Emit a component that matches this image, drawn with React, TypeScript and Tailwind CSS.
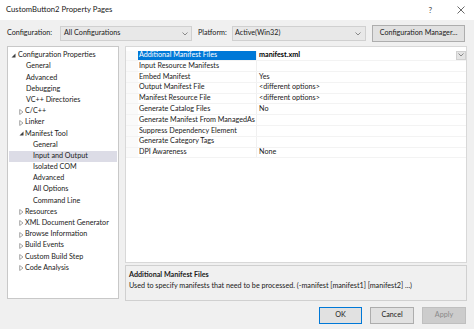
import React from "react";

const font = { fontFamily: 'Lato, "Noto Sans", sans-serif' };

type TreeItem = { label: string; level: number; arrow?: "open" | "closed"; selected?: boolean };

const tree: TreeItem[] = [
  { label: "Configuration Properties", level: 0, arrow: "open" },
  { label: "General", level: 1 },
  { label: "Advanced", level: 1 },
  { label: "Debugging", level: 1 },
  { label: "VC++ Directories", level: 1 },
  { label: "C/C++", level: 1, arrow: "closed" },
  { label: "Linker", level: 1, arrow: "closed" },
  { label: "Manifest Tool", level: 1, arrow: "open" },
  { label: "General", level: 2 },
  { label: "Input and Output", level: 2, selected: true },
  { label: "Isolated COM", level: 2 },
  { label: "Advanced", level: 2 },
  { label: "All Options", level: 2 },
  { label: "Command Line", level: 2 },
  { label: "Resources", level: 1, arrow: "closed" },
  { label: "XML Document Generator", level: 1, arrow: "closed" },
  { label: "Browse Information", level: 1, arrow: "closed" },
  { label: "Build Events", level: 1, arrow: "closed" },
  { label: "Custom Build Step", level: 1, arrow: "closed" },
  { label: "Code Analysis", level: 1, arrow: "closed" },
];

const props: [string, string][] = [
  ["Additional Manifest Files", "manifest.xml"],
  ["Input Resource Manifests", ""],
  ["Embed Manifest", "Yes"],
  ["Output Manifest File", "<different options>"],
  ["Manifest Resource File", "<different options>"],
  ["Generate Catalog Files", "No"],
  ["Generate Manifest From ManagedAs", ""],
  ["Suppress Dependency Element", ""],
  ["Generate Category Tags", ""],
  ["DPI Awareness", "None"],
];

function Chevron() {
  return (
    <svg width="6" height="4" viewBox="0 0 6 4" className="shrink-0">
      <path d="M0.5 0.5 L3 3 L5.5 0.5" fill="none" stroke="#707070" strokeWidth="0.8" />
    </svg>
  );
}

function Arrow({ kind }: { kind: "open" | "closed" }) {
  if (kind === "open")
    return (
      <svg width="5" height="5" viewBox="0 0 5 5" className="shrink-0">
        <path d="M4.5 0.5 L4.5 4.5 L0.5 4.5 Z" fill="#404040" />
      </svg>
    );
  return (
    <svg width="5" height="6" viewBox="0 0 5 6" className="shrink-0">
      <path d="M0.7 0.5 L4 3 L0.7 5.5 Z" fill="none" stroke="#808080" strokeWidth="0.7" />
    </svg>
  );
}

export default function App() {
  return (
    <div className="w-[474px] h-[329px] bg-[#f0f0f0] text-[7.2px] text-[#1a1a1a] flex flex-col overflow-hidden whitespace-nowrap" style={font}>
      {/* title bar */}
      <div className="h-[20px] bg-white flex items-center pl-[6px] pr-[9px] text-[7.7px] shrink-0">
        <span className="flex-1 text-[#202020]">CustomButton2 Property Pages</span>
        <span className="text-[8px] text-[#444] mr-[25px]">?</span>
        <svg width="8" height="8" viewBox="0 0 8 8">
          <path d="M0.5 0.5 L7.5 7.5 M7.5 0.5 L0.5 7.5" stroke="#444" strokeWidth="0.8" />
        </svg>
      </div>

      {/* config row */}
      <div className="flex items-center h-[17px] mt-[5px] pl-[7px] pr-[8px] shrink-0">
        <span className="w-[53px]">Configuration:</span>
        <div className="w-[132px] h-[15px] bg-[#e8e8e8] border border-[#d0d0d0] flex items-center pl-[3px] pr-[3px]">
          <span className="flex-1">All Configurations</span>
          <Chevron />
        </div>
        <span className="ml-[6px] w-[34px]">Platform:</span>
        <div className="w-[134px] h-[15px] bg-[#e8e8e8] border border-[#d0d0d0] flex items-center pl-[2px] pr-[4px]">
          <span className="flex-1">Active(Win32)</span>
          <Chevron />
        </div>
        <div className="ml-[6px] w-[93px] h-[17px] bg-[#e1e1e1] border border-[#adadad] flex items-center justify-center">
          Configuration Manager...
        </div>
      </div>

      {/* main area */}
      <div className="flex mt-[4px] pl-[7px] pr-[7px] gap-[6px]">
        {/* tree */}
        <div className="w-[112px] h-[253px] bg-white border border-[#c8c8c8] pt-[3px] pl-px pr-px overflow-hidden">
          {tree.map((t, i) => (
            <div
              key={i}
              className={
                "h-[11.2px] flex items-center " + (t.selected ? "bg-[#dcdce6]" : "")
              }
              style={{ paddingLeft: t.level === 0 ? 2 : t.level === 1 ? (t.arrow ? 10 : 17) : 24 }}
            >
              {t.arrow && (
                <span className="w-[6px] flex items-center">
                  <Arrow kind={t.arrow} />
                </span>
              )}
              <span className={t.level === 0 ? "ml-px" : ""}>{t.label}</span>
            </div>
          ))}
        </div>

        {/* right */}
        <div className="flex-1 flex flex-col min-w-0">
          <div className="h-[217px] bg-white border border-[#d8d8d8] pt-[3.5px]">
            {props.map(([k, v], i) => (
              <div key={i} className="h-[10.8px] flex border-b border-[#f3f3f3]">
                <div className="w-[12px] bg-[#fafafa]" />
                <div
                  className={
                    "w-[119px] flex items-center pl-[1px] border-r border-[#f0f0f0] overflow-hidden " +
                    (i === 0 ? "bg-[#0078d7] text-white" : "")
                  }
                >
                  {k}
                </div>
                <div className={"flex-1 flex items-center pl-[2px] " + (i === 0 ? "font-bold text-black" : "")}>
                  {v}
                </div>
                {i === 0 && (
                  <div className="w-[10px] bg-[#e4e4e4] border border-[#d0d0d0] flex items-center justify-center">
                    <Chevron />
                  </div>
                )}
              </div>
            ))}
          </div>
          <div className="h-[36px] mt-[2px] border border-[#d0d0d0] pl-[3px] pt-[3px]">
            <div className="font-bold leading-[11px]">Additional Manifest Files</div>
            <div className="leading-[11px]">
              Used to specify manifests that need to be processed. (-manifest [manifest1] [manifest2] ...)
            </div>
          </div>
        </div>
      </div>

      {/* buttons */}
      <div className="flex justify-end gap-[8px] pr-[8px] mt-[6px]">
        <div className="w-[43px] h-[17px] bg-[#e1e1e1] border border-[#0078d7] flex items-center justify-center">OK</div>
        <div className="w-[44px] h-[17px] bg-[#e1e1e1] border border-[#adadad] flex items-center justify-center">Cancel</div>
        <div className="w-[44px] h-[17px] bg-[#cccccc] border border-[#bfbfbf] flex items-center justify-center text-[#8a8a8a]">Apply</div>
      </div>
    </div>
  );
}
